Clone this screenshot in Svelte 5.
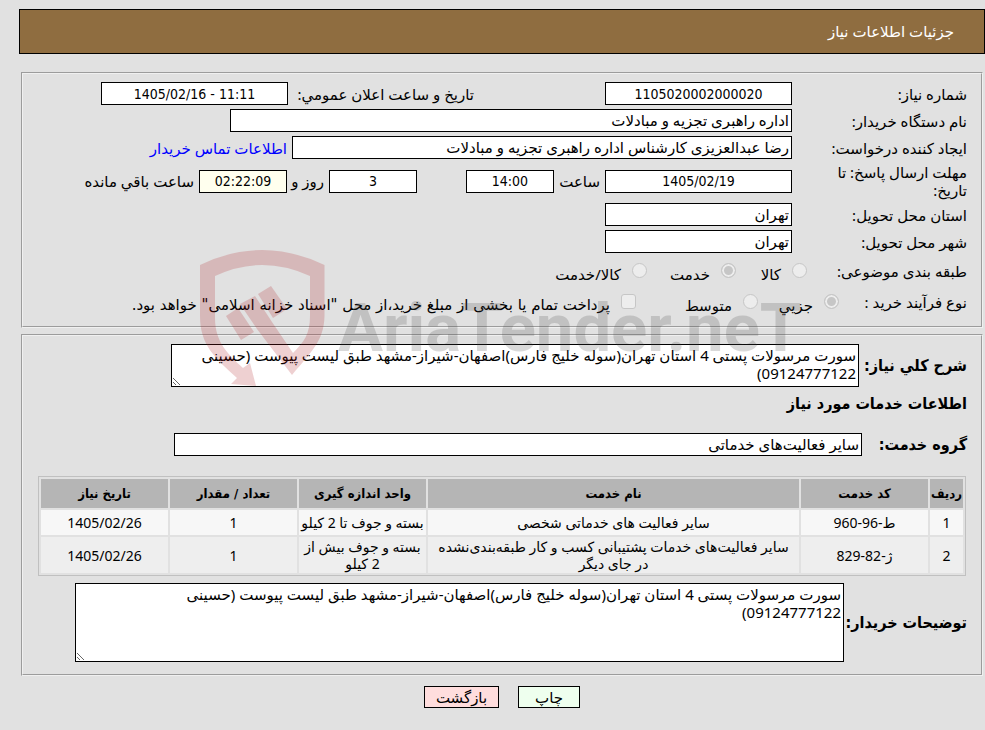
<script>
  const columns = ["ردیف", "کد خدمت", "نام خدمت", "واحد اندازه گیری", "تعداد / مقدار", "تاریخ نیاز"];

  const services = [
    {
      code: "ط-96-960",
      name: "سایر فعالیت های خدماتی شخصی",
      unit: "بسته و جوف تا 2 کیلو",
      amount: 1,
      date: "1405/02/26"
    },
    {
      code: "ژ-82-829",
      name: "سایر فعالیت‌های خدمات پشتیبانی کسب و کار طبقه‌بندی‌نشده در جای دیگر",
      unit: "بسته و جوف بیش از 2 کیلو",
      amount: 1,
      date: "1405/02/26"
    }
  ];

  let summary = "سورت مرسولات پستی 4 استان تهران(سوله خلیج فارس)اصفهان-شیراز-مشهد طبق لیست پیوست (حسینی\n09124777122)";
  let notes = summary;
</script>

<div class="page" dir="rtl" lang="fa">
  <h1 class="title">جزئیات اطلاعات نیاز</h1>

  <fieldset>
    <div class="row">
      <label class="name" for="number">شماره نیاز:</label>
      <input class="medium center" id="number" type="text" readonly value="1105020002000020" />
      <label class="announce" for="announce">تاریخ و ساعت اعلان عمومي:</label>
      <input class="medium center" id="announce" type="text" dir="ltr" readonly value="1405/02/16 - 11:11" />
    </div>

    <div class="row">
      <label class="name" for="org">نام دستگاه خریدار:</label>
      <input class="wide" id="org" type="text" readonly value="اداره راهبری تجزیه و مبادلات" />
    </div>

    <div class="row">
      <label class="name" for="creator">ایجاد کننده درخواست:</label>
      <input class="creator" id="creator" type="text" readonly value="رضا عبدالعزیزی کارشناس اداره راهبری تجزیه و مبادلات" />
      <a class="after" href="#contact">اطلاعات تماس خریدار</a>
    </div>

    <div class="row deadline">
      <label class="name" for="deadline"><span>مهلت ارسال پاسخ: تا تاریخ:</span></label>
      <input class="medium center" id="deadline" type="text" readonly value="1405/02/19" />
      <label class="hour" for="hour">ساعت</label>
      <input class="small center" id="hour" type="text" readonly value="14:00" />
      <input class="small center days" id="days" type="text" readonly value="3" />
      <label class="day" for="days">روز و</label>
      <input class="small center remaining" id="remaining" type="text" readonly value="02:22:09" />
      <label class="after" for="remaining">ساعت باقي مانده</label>
    </div>

    <div class="row">
      <label class="name" for="province">استان محل تحویل:</label>
      <input class="medium" id="province" type="text" readonly value="تهران" />
    </div>

    <div class="row">
      <label class="name" for="city">شهر محل تحویل:</label>
      <input class="medium" id="city" type="text" readonly value="تهران" />
    </div>

    <div class="row choice">
      <span class="name subject-name">طبقه بندی موضوعی:</span>
      <div class="options subject">
        <label><input type="radio" name="subject" disabled /><span>کالا</span></label>
        <label><input type="radio" name="subject" disabled checked /><span>خدمت</span></label>
        <label><input type="radio" name="subject" disabled /><span>کالا/خدمت</span></label>
      </div>
    </div>

    <div class="row choice">
      <span class="name process-name">نوع فرآیند خرید :</span>
      <div class="options process">
        <label><input type="radio" name="process" disabled checked /><span>جزیي</span></label>
        <label><input type="radio" name="process" disabled /><span>متوسط</span></label>
        <label><input type="checkbox" disabled /><span class="treasury">پرداخت تمام یا بخشی از مبلغ خرید،از محل "اسناد خزانه اسلامی" خواهد بود.</span></label>
      </div>
    </div>
  </fieldset>

  <fieldset class="details">
    <div class="row block">
      <label class="heading summary-name" for="summary">شرح كلي نیاز:</label>
      <textarea class="summary" id="summary" readonly value={summary}></textarea>
    </div>

    <h2 class="heading">اطلاعات خدمات مورد نیاز</h2>

    <div class="row block">
      <label class="heading group-name" for="group">گروه خدمت:</label>
      <input class="group" id="group" type="text" readonly value="سایر فعالیت‌های خدماتی" />
    </div>

    <table>
      <thead>
        <tr>
          {#each columns as column}
            <th>{column}</th>
          {/each}
        </tr>
      </thead>
      <tbody>
        {#each services as service, i}
          <tr>
            <td>{i + 1}</td>
            <td>{service.code}</td>
            <td class="service">{service.name}</td>
            <td>{service.unit}</td>
            <td>{service.amount}</td>
            <td>{service.date}</td>
          </tr>
        {/each}
      </tbody>
    </table>

    <div class="row block">
      <label class="heading notes-name" for="notes">توضیحات خریدار:</label>
      <textarea class="notes" id="notes" readonly value={notes}></textarea>
    </div>
  </fieldset>

  <div class="buttons">
    <button class="print" type="button">چاپ</button>
    <button class="back" type="button">بازگشت</button>
  </div>

  <!-- watermark, lies over both fieldsets -->
  <svg class="watermark" viewBox="200 250 600 140" direction="ltr" aria-hidden="true">
    <g fill="#af191e">
      <path d="M200 265 Q262 235 324.500 265 V316 C324 341 311 352 292 375 L257 329 L240 304 L255 296 L272 322 L293 353 C304 342 310 334 310 316 V276 Q262 254 215 276 V318 C215 343 229 355 243 368 L250 363 L256 386 L231 384 L237 378 C215 358 200 345 200 316 Z" />
      <path d="M226 316 L238 308 L254 332 L241 340 Z" />
      <path d="M258 294 L271 286 L287 309 L273 318 Z" />
    </g>
    <text x="338" y="351" fill="#464646">AriaTender.neT</text>
  </svg>
</div>

<style>
  :global(body) {
    margin: 0;
    background: #e1e1e1;
  }

  .page {
    position: relative;
    padding: 9px 0 22px 19px;
    font-family: "Noto Sans", "DejaVu Sans", sans-serif;
    font-size: 15px;
    line-height: 18px;
    color: #000;
  }

  .title {
    margin: 0 0 18px;
    padding: 12px 30px 13px;
    border: 1px solid #000;
    background: #8f6d40;
    color: #fff;
    font-size: 15px;
    font-weight: normal;
  }

  fieldset {
    margin: 0 2px 6px;
    padding: 6px 14px 9px;
    border: 2px groove #f0f0f0;
  }

  .row {
    display: flex;
    align-items: center;
    min-height: 27px;
    white-space: nowrap;
  }

  .name {
    flex: none;
    box-sizing: border-box;
    width: 175px;
  }

  input[type="text"],
  textarea {
    box-sizing: border-box;
    flex: none;
    padding: 1px 2px;
    border: 1px solid #000;
    border-radius: 0;
    background: #fff;
    color: #000;
    font: inherit;
  }

  input,
  textarea {
    margin: 0;
  }

  input[type="text"] {
    height: 23px;
    padding: 0 2px 2px;
  }

  .medium {
    width: 187px;
  }

  .small {
    width: 88px;
  }

  .wide {
    width: 562px;
  }

  .creator {
    width: 500px;
  }

  input.center {
    padding: 1px 2px;
    font-family: "DejaVu Sans Condensed", "DejaVu Sans", sans-serif;
    font-size: 14px;
    text-align: center;
  }

  .announce {
    width: 186px;
    margin-right: 131px;
  }

  .after {
    margin-right: 5px;
  }

  a {
    color: #0000ff;
    text-decoration: none;
  }

  .deadline {
    min-height: 40px;
  }

  .deadline span {
    display: block;
    width: 144px;
    white-space: normal;
  }

  .hour {
    width: 46px;
    padding-right: 5px;
  }

  .days {
    margin-right: 49px;
  }

  .day {
    width: 37px;
    padding-right: 5px;
  }

  input.remaining {
    background: #ffffee;
  }

  .choice {
    min-height: 31px;
  }

  .subject-name {
    width: 160px;
  }

  .process-name {
    width: 128px;
  }

  .options {
    display: grid;
    padding-top: 5px;
  }

  .subject {
    grid-template-columns: 71px 89px auto;
  }

  .process {
    grid-template-columns: 81px 122px auto;
  }

  .options label {
    display: flex;
    align-items: flex-start;
    gap: 11px;
  }

  .options span {
    padding-top: 2px;
  }

  .treasury {
    font-family: "DejaVu Sans", sans-serif;
  }

  .options input {
    appearance: none;
    flex: none;
    width: 15px;
    height: 15px;
    border: 1px solid #c6c6c6;
    border-radius: 3px;
    background: #ededed;
  }

  .options input[type="radio"] {
    border-radius: 50%;
  }

  .options input[type="radio"]:checked {
    background: #c6c6c6;
    box-shadow: inset 0 0 0 2px #ededed;
  }

  .details {
    margin-bottom: 10px;
    padding: 8px 14px 12px;
  }

  .heading {
    flex: none;
    margin: 0;
    font-family: "DejaVu Sans Condensed", "DejaVu Sans", sans-serif;
    font-size: 16px;
    font-weight: bold;
  }

  .block {
    gap: 5px;
  }

  textarea {
    display: block;
    white-space: pre-wrap;
  }

  .summary-name {
    width: 103px;
  }

  .summary {
    width: 688px;
    height: 43px;
  }

  h2.heading {
    padding: 8px 0 18px;
  }

  .group-name {
    width: 100px;
  }

  .group {
    width: 688px;
  }

  table {
    width: calc(100% - 2px);
    margin: 18px 1px 7px;
    border: 1px solid #c0c0c0;
    border-spacing: 2px;
    table-layout: fixed;
    font-size: 14px;
    line-height: 17px;
    text-align: center;
  }

  th,
  td {
    padding: 1px;
  }

  th {
    height: 27px;
    background: #b5b5b5;
    font-family: "DejaVu Sans Condensed", "DejaVu Sans", sans-serif;
    font-size: 13px;
  }

  th:first-child {
    width: 31px;
  }

  th:nth-child(2),
  th:nth-child(n + 4) {
    width: 125px;
  }

  td {
    height: 23px;
    background: #f7f7f7;
  }

  td.service {
    padding: 1px 8px;
  }

  tbody tr:nth-child(even) td {
    background: #eee;
  }

  .notes-name {
    width: 118px;
  }

  .notes {
    width: 769px;
    height: 79px;
  }

  .buttons {
    display: flex;
    justify-content: center;
    gap: 19px;
  }

  button {
    height: 22px;
    padding: 0;
    border: 1px solid #000;
    border-radius: 0;
    color: #000;
    font: inherit;
    line-height: 18px;
  }

  .print {
    width: 62px;
    background: #eeffee;
  }

  .back {
    width: 75px;
    background: #ffdddd;
  }

  .watermark {
    position: absolute;
    top: 250px;
    left: 200px;
    width: 600px;
    height: 140px;
    opacity: 0.2;
    pointer-events: none;
  }

  .watermark text {
    font-family: Roboto, sans-serif;
    font-size: 67px;
    font-weight: bold;
  }
</style>
